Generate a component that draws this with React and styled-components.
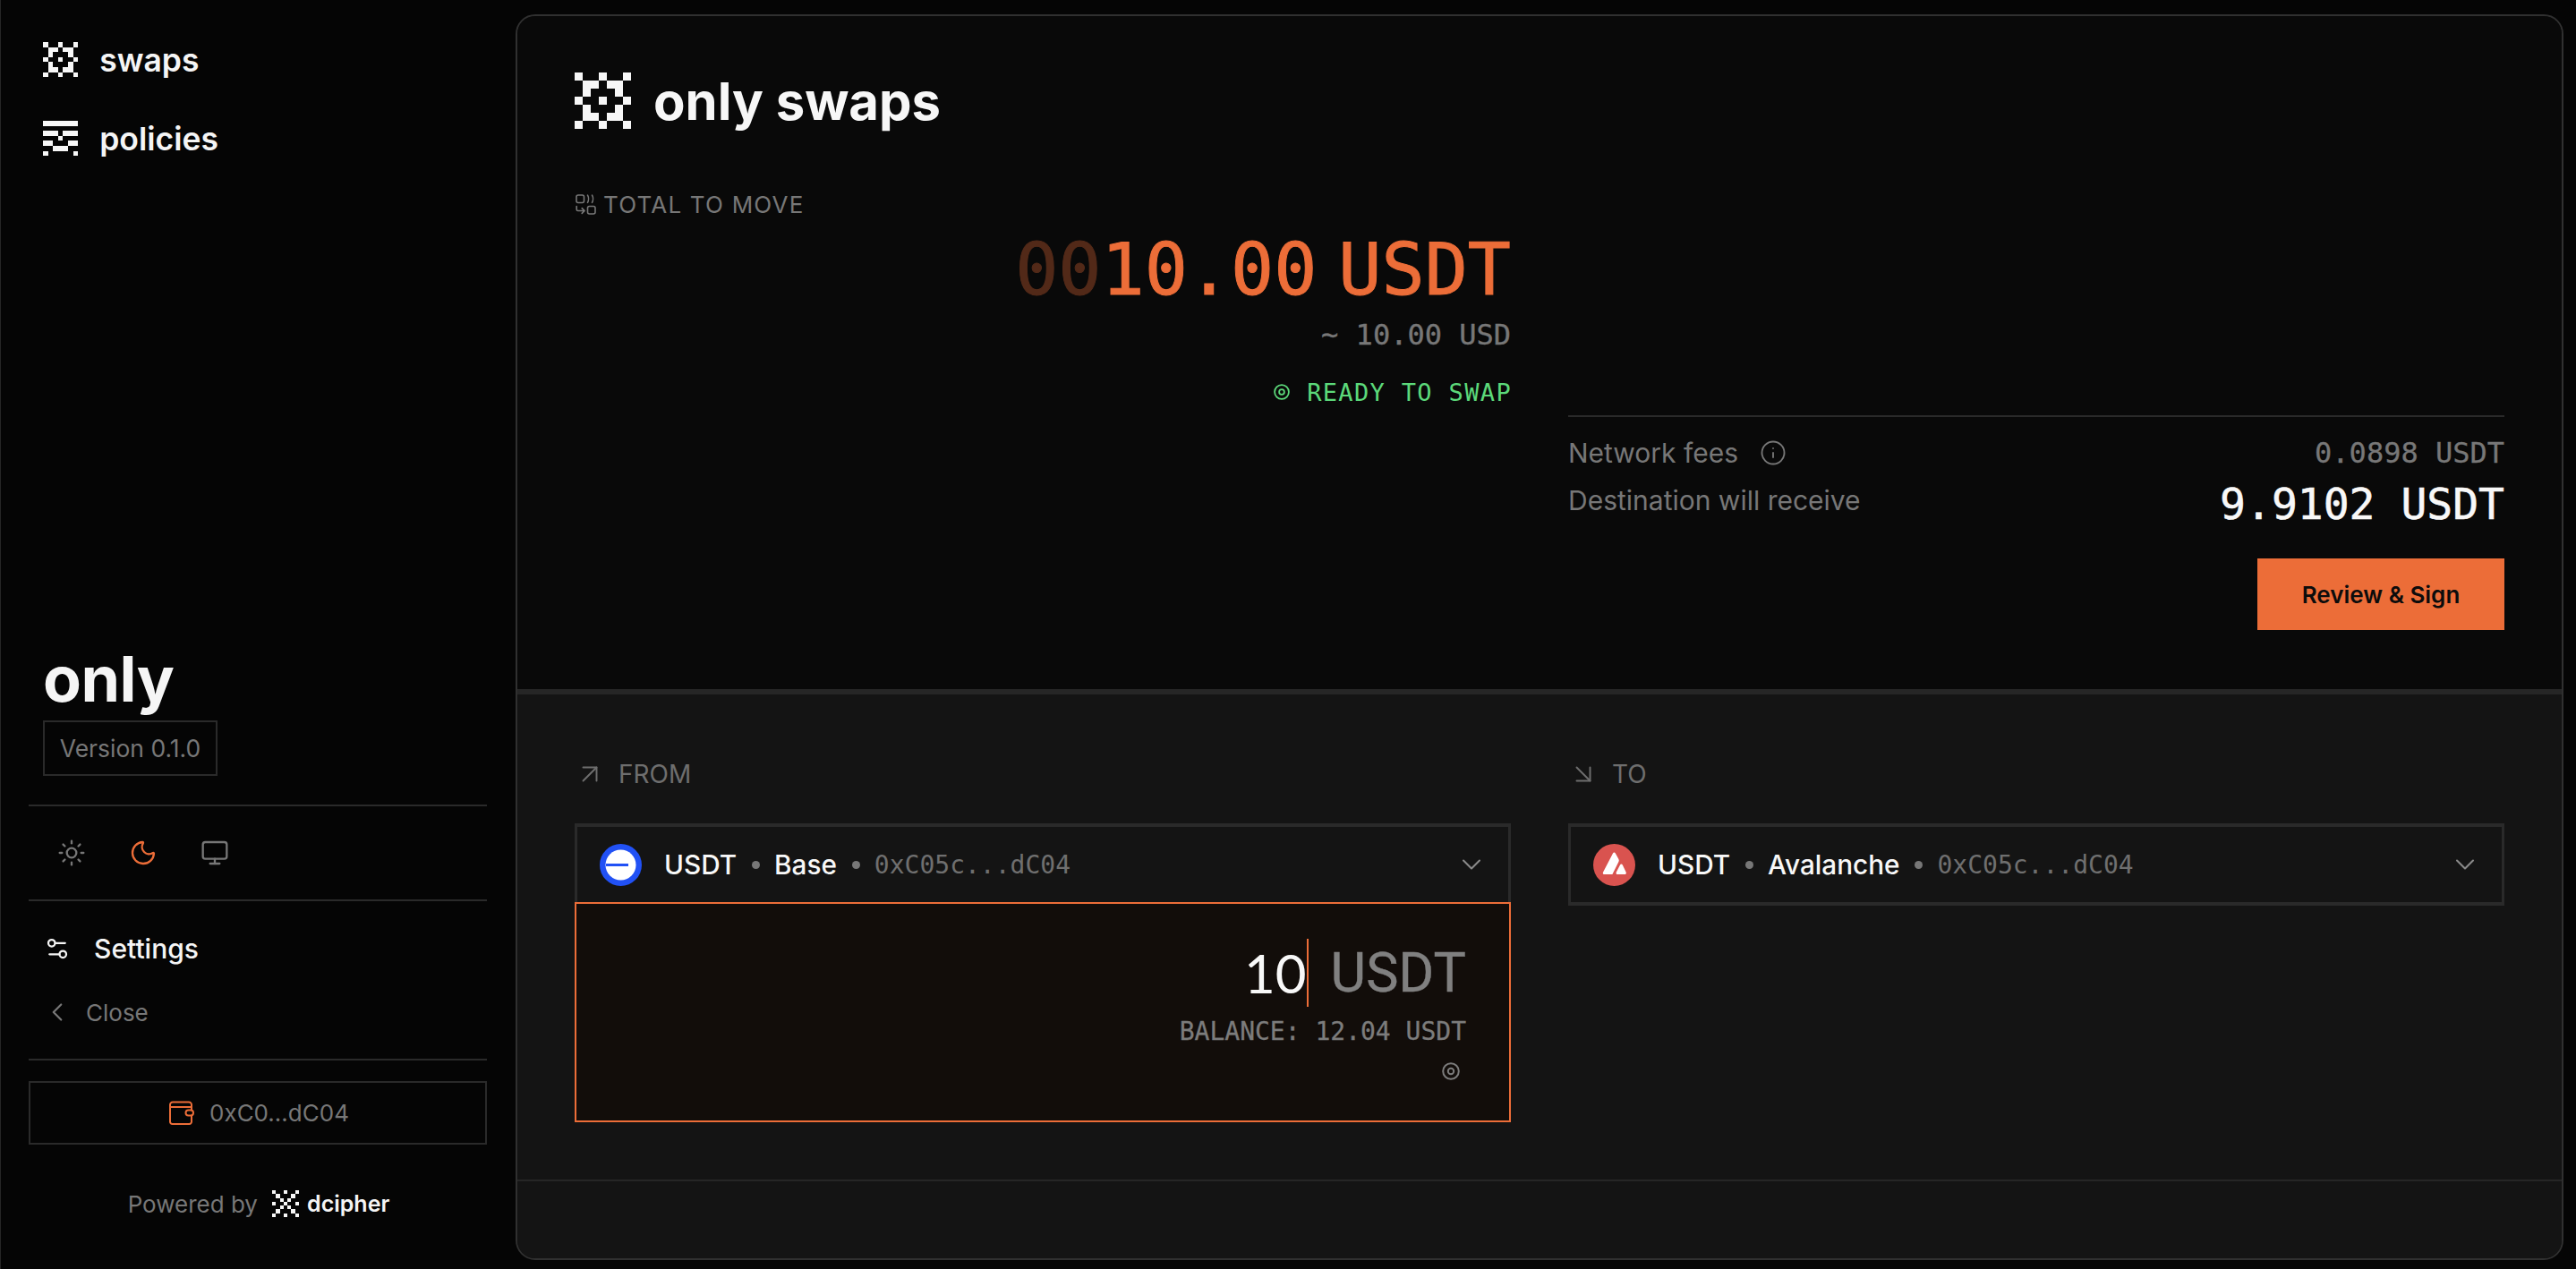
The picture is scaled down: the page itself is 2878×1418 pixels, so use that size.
import React from "react";
import styled, { createGlobalStyle } from "styled-components";
import { Sun, Moon, Monitor, Settings2, ChevronLeft, ChevronDown, Info, ArrowUpRight, ArrowDownRight } from "lucide-react";

const SANS = `Inter, "Liberation Sans", sans-serif`;
const MONO = `"DejaVu Sans Mono", monospace`;
const ORANGE = "#ec6d38";
const DIM = "#777777";
const LINE = "#2a2a2a";

const Global = createGlobalStyle`
  html, body { margin: 0; padding: 0; background: #050505; }
  * { box-sizing: border-box; }
  body { font-family: ${SANS}; color: #f5f5f5; }
`;

const Shell = styled.div`
  display: flex;
  width: 2878px;
  height: 1418px;
  overflow: hidden;
  background: #050505;
`;

const Sidebar = styled.aside`
  width: 576px;
  flex: none;
  display: flex;
  flex-direction: column;
  padding: 0 32px 0 31px;
  border-left: 1px solid #262626;
`;

const Nav = styled.nav`
  display: flex;
  flex-direction: column;
  gap: 48px;
  padding: 47px 0 0 16px;
`;

const NavItem = styled.div`
  display: flex;
  align-items: center;
  gap: 24px;
  height: 40px;
  font-size: 35.5px;
  font-weight: 600;
  color: #f5f5f5;
`;

const Spacer = styled.div`
  flex: 1;
`;

const Brand = styled.div`
  padding-left: 16px;
  font-size: 70px;
  line-height: 68px;
  font-weight: 700;
  letter-spacing: -0.5px;
  color: #f5f5f5;
`;

const VersionBadge = styled.div`
  margin: 12px 0 32px 16px;
  width: 195px;
  height: 62px;
  border: 2px solid ${LINE};
  display: flex;
  align-items: center;
  justify-content: center;
  font-size: 26.5px;
  color: ${DIM};
`;

const Rule = styled.div`
  height: 2px;
  background: ${LINE};
`;

const ThemeRow = styled.div`
  display: flex;
  align-items: center;
  height: 104px;
  padding-left: 32px;
  gap: 48px;
`;

const ThemeButton = styled.span`
  display: flex;
  color: ${(p) => (p.$active ? ORANGE : DIM)};
`;

const SettingsRow = styled.div`
  display: flex;
  align-items: center;
  gap: 26px;
  height: 40px;
  margin: 33px 0 0 17px;
  font-size: 30px;
  font-weight: 500;
  color: #f5f5f5;
`;

const CloseRow = styled.div`
  display: flex;
  align-items: center;
  gap: 15px;
  height: 36px;
  margin: 33px 0 34px 15px;
  font-size: 26px;
  color: ${DIM};
`;

const WalletButton = styled.div`
  margin-top: 23px;
  height: 71px;
  border: 2px solid ${LINE};
  display: flex;
  align-items: center;
  justify-content: center;
  gap: 17px;
  padding-left: 3px;
  font-size: 26px;
  color: ${DIM};
`;

const Powered = styled.div`
  margin: 50px 0 57px;
  height: 32px;
  display: flex;
  align-items: center;
  justify-content: center;
  padding-left: 2px;
  font-size: 26px;
  color: ${DIM};
`;

const PoweredLogo = styled.span`
  display: flex;
  align-items: center;
  margin-left: 16px;
  gap: 9px;
  font-size: 25px;
  font-weight: 600;
  color: #f5f5f5;
`;

const Main = styled.main`
  flex: 1;
  margin: 16px 14px 10px 0;
  border: 2px solid #303030;
  border-radius: 22px;
  overflow: hidden;
  display: flex;
  flex-direction: column;
  background: #141414;
`;

const TopPanel = styled.section`
  height: 758px;
  flex: none;
  background: #090909;
  padding: 63px 64px 0;
  border-bottom: 6px solid #262626;
`;

const Title = styled.div`
  display: flex;
  align-items: center;
  gap: 25px;
  height: 63px;
  font-size: 58px;
  font-weight: 700;
  color: #f7f7f7;
`;

const Columns = styled.div`
  display: grid;
  grid-template-columns: 1fr 1fr;
  column-gap: 64px;
`;

const TopColumns = styled(Columns)`
  height: 560px;
`;

const LeftStack = styled.div`
  display: flex;
  flex-direction: column;
  align-items: flex-end;
  padding-top: 68px;
`;

const SectionLabel = styled.div`
  align-self: flex-start;
  display: flex;
  align-items: center;
  gap: 8px;
  height: 32px;
  padding-left: 1px;
  font-size: 26px;
  letter-spacing: 1.2px;
  color: ${DIM};
`;

const TotalAmount = styled.div`
  display: flex;
  gap: 24px;
  margin-top: 10px;
  font-family: ${MONO};
  font-size: 80px;
  line-height: 96px;
  color: ${ORANGE};
  -webkit-text-stroke: 1px ${ORANGE};
`;

const Zeros = styled.span`
  opacity: 0.32;
`;

const FiatValue = styled.div`
  margin-top: 4px;
  font-family: ${MONO};
  font-size: 32px;
  line-height: 40px;
  color: ${DIM};
  -webkit-text-stroke: 0.4px ${DIM};
`;

const Ready = styled.div`
  margin-top: 28px;
  display: flex;
  align-items: center;
  gap: 19px;
  height: 32px;
  font-family: ${MONO};
  font-size: 27px;
  letter-spacing: 1.35px;
  margin-right: -1px;
  color: #5cd97a;
`;

const Summary = styled.div`
  display: flex;
  flex-direction: column;
  justify-content: flex-end;
`;

const SummaryRule = styled(Rule)`
  margin-bottom: 20px;
`;

const SummaryRow = styled.div`
  display: flex;
  justify-content: space-between;
  align-items: flex-start;
  height: ${(p) => p.$h}px;
`;

const SummaryLabel = styled.span`
  display: flex;
  align-items: center;
  gap: 24px;
  font-size: 30px;
  line-height: 40px;
  color: ${DIM};
`;

const SummaryValue = styled.span`
  font-family: ${MONO};
  font-size: ${(p) => (p.$big ? 48 : 32)}px;
  line-height: ${(p) => (p.$big ? 60 : 40)}px;
  margin-top: ${(p) => (p.$big ? -6 : 0)}px;
  color: ${(p) => (p.$big ? "#f8f8f8" : DIM)};
  -webkit-text-stroke: ${(p) => (p.$big ? 0.6 : 0.3)}px currentColor;
`;

const ReviewButton = styled.button`
  align-self: flex-end;
  margin-top: 29px;
  width: 276px;
  height: 80px;
  border: 0;
  border-radius: 0;
  background: ${ORANGE};
  color: #0c0c0c;
  font-family: ${SANS};
  font-size: 26px;
  font-weight: 600;
`;

const BottomPanel = styled.section`
  flex: 1;
  display: flex;
  flex-direction: column;
  background: #141414;
`;

const SwapArea = styled(Columns)`
  height: 544px;
  padding: 64px 64px 0;
  flex: none;
  border-bottom: 2px solid #262626;
`;

const SideColumn = styled.div`
  display: flex;
  flex-direction: column;
`;

const SideLabel = styled.div`
  display: flex;
  align-items: center;
  height: 50px;
  gap: 14px;
  margin-left: -1px;
  font-size: 28px;
  color: #6e6e6e;
`;

const Select = styled.div`
  margin-top: 30px;
  height: ${(p) => (p.$attached ? 88 : 92)}px;
  border: 3px solid ${LINE};
  border-width: ${(p) => (p.$attached ? "4px 3px 0" : "4px 3px")};
  display: flex;
  align-items: center;
  padding: 0 23px 0 25px;
  font-size: 29.7px;
  font-weight: 500;
  color: #f8f8f8;
`;

const ChainBadge = styled.svg`
  width: 47px;
  height: 47px;
  flex: none;
  margin-right: 25px;
`;

const Dot = styled.span`
  width: 9px;
  height: 9px;
  border-radius: 50%;
  background: #777;
  margin: 0 16px 0 17px;
  flex: none;
`;

const Address = styled.span`
  font-family: ${MONO};
  font-size: 28px;
  font-weight: 400;
  color: #6f6f6f;
`;

const Chevron = styled.span`
  margin-left: auto;
  display: flex;
  color: #8a8a8a;
`;

const AmountBox = styled.div`
  height: 246px;
  border: 2px solid ${ORANGE};
  background: #120d0a;
  display: flex;
  flex-direction: column;
  align-items: flex-end;
  padding: 39px 48px 0 0;
`;

const AmountLine = styled.div`
  display: flex;
  align-items: center;
  height: 76px;
  font-size: 60px;
`;

const AmountInput = styled.span`
  font-family: Lato, sans-serif;
  color: #f8f8f8;
  border-right: 2px solid ${ORANGE};
  line-height: 76px;
  height: 76px;
`;

const AmountUnit = styled.span`
  margin-left: 25px;
  font-family: Roboto, sans-serif;
  font-size: 61px;
  color: #808080;
  -webkit-text-stroke: 0.4px #808080;
`;

const Balance = styled.div`
  margin-top: 11px;
  font-family: ${MONO};
  font-size: 28px;
  line-height: 34px;
  color: #7c7c7c;
  -webkit-text-stroke: 0.3px #7c7c7c;
`;

const MaxTarget = styled.span`
  display: flex;
  margin-top: 17px;
  margin-right: 7px;
  color: #7c7c7c;
`;

const Footer = styled.div`
  flex: 1;
`;

function Pixels({ rows, cell, color = "#f7f7f7" }) {
  const n = rows[0].length;
  const size = n * cell;
  return (
    <svg width={size} height={rows.length * cell} viewBox={`0 0 ${n} ${rows.length}`} shapeRendering="crispEdges" style={{ flex: "none" }}>
      {rows.flatMap((r, y) =>
        r.split("").map((c, x) => (c === "1" ? <rect key={`${x}-${y}`} x={x} y={y} width="1" height="1" fill={color} /> : null))
      )}
    </svg>
  );
}

const SWAP_ICON = ["1001001", "0110110", "0100010", "1001001", "0100010", "0110110", "1001001"];
const POLICY_ICON = ["1111111", "0000000", "1110111", "0001000", "1100011", "0011100", "1000001"];
const DCIPHER_ICON = ["1001001", "0100010", "0010100", "1001001", "0010100", "0100010", "1001001"];

const MoveIcon = () => (
  <svg width="23" height="23" viewBox="0 0 23 23" fill="none" stroke="#777" strokeWidth="1.6" strokeLinecap="round" strokeLinejoin="round" style={{ flex: "none" }}>
    <rect x="1" y="1" width="8.5" height="8.5" rx="2" />
    <rect x="13.5" y="13.5" width="8.5" height="8.5" rx="2" />
    <path d="M13.5 1.2c1.3 2.2 1.3 6 0 8.1M18.5 1.2c1.3 2.2 1.3 6 0 8.1" />
    <path d="M1.2 13.5v3.5c0 .8.6 1.5 1.5 1.5h7.3M7.2 15.6l2.9 2.9-2.9 2.9" />
  </svg>
);

const TargetIcon = ({ size = 20 }) => (
  <svg width={size} height={size} viewBox="0 0 20 20" fill="none" stroke="currentColor" strokeWidth="2" style={{ flex: "none" }}>
    <circle cx="10" cy="10" r="8.8" />
    <circle cx="10" cy="10" r="3.2" />
  </svg>
);

const WalletIcon = () => (
  <svg width="28" height="27" viewBox="0 0 28 27" fill="none" stroke={ORANGE} strokeWidth="2" strokeLinecap="round" strokeLinejoin="round" style={{ flex: "none" }}>
    <path d="M25 10V4.500a3 3 0 0 0-3-3H4a3 3 0 0 0-3 3v19a2.500 2.500 0 0 0 2.500 2.500h19a2.500 2.500 0 0 0 2.500-2.500V17" />
    <path d="M1 7h24" />
    <rect x="18.500" y="10.500" width="8.500" height="6" rx="3" />
  </svg>
);

const BaseBadge = () => (
  <ChainBadge viewBox="0 0 47 47">
    <circle cx="23.5" cy="23.5" r="23.5" fill="#2151f5" />
    <circle cx="23.5" cy="23.5" r="17" fill="#fff" />
    <rect x="7" y="22" width="25" height="3" fill="#2151f5" />
  </ChainBadge>
);

const AvalancheBadge = () => (
  <ChainBadge viewBox="0 0 47 47">
    <circle cx="23.5" cy="23.5" r="23.5" fill="#d9534f" />
    <path d="M22 10.5c.8-1.4 2-1.4 2.800 0l3.600 6.600c.5 1 .5 2 0 3L21.400 34H12.600c-1.600 0-2.300-1.200-1.500-2.600L22 10.500z" fill="#fff" />
    <path d="M30 23.600c.8-1.400 2-1.400 2.800 0l3.800 7.800c.7 1.400 0 2.600-1.600 2.600h-7.600c-1.600 0-2.300-1.200-1.600-2.600L30 23.600z" fill="#fff" />
  </ChainBadge>
);

function SelectBox({ badge, chain, attached }) {
  return (
    <Select $attached={attached}>
      {badge}
      <span>USDT</span>
      <Dot />
      <span>{chain}</span>
      <Dot />
      <Address>0xC05c...dC04</Address>
      <Chevron>
        <ChevronDown size={36} strokeWidth={1.4} />
      </Chevron>
    </Select>
  );
}

export default function App() {
  return (
    <Shell>
      <Global />
      <Sidebar>
        <Nav>
          <NavItem>
            <Pixels rows={SWAP_ICON} cell={5.6} />
            swaps
          </NavItem>
          <NavItem>
            <Pixels rows={POLICY_ICON} cell={5.6} />
            policies
          </NavItem>
        </Nav>
        <Spacer />
        <Brand>only</Brand>
        <VersionBadge>Version 0.1.0</VersionBadge>
        <Rule />
        <ThemeRow>
          <ThemeButton><Sun size={32} strokeWidth={1.75} /></ThemeButton>
          <ThemeButton $active><Moon size={32} strokeWidth={1.75} /></ThemeButton>
          <ThemeButton><Monitor size={32} strokeWidth={1.75} /></ThemeButton>
        </ThemeRow>
        <Rule />
        <SettingsRow>
          <Settings2 size={30} strokeWidth={1.8} />
          Settings
        </SettingsRow>
        <CloseRow>
          <ChevronLeft size={34} strokeWidth={1.6} />
          Close
        </CloseRow>
        <Rule />
        <WalletButton>
          <WalletIcon />
          0xC0…dC04
        </WalletButton>
        <Powered>
          Powered by
          <PoweredLogo>
            <Pixels rows={DCIPHER_ICON} cell={4.3} />
            dcipher
          </PoweredLogo>
        </Powered>
      </Sidebar>
      <Main>
        <TopPanel>
          <Title>
            <Pixels rows={SWAP_ICON} cell={9} />
            only swaps
          </Title>
          <TopColumns>
            <LeftStack>
              <SectionLabel>
                <MoveIcon />
                TOTAL TO MOVE
              </SectionLabel>
              <TotalAmount>
                <span><Zeros>00</Zeros>10.00</span>
                <span>USDT</span>
              </TotalAmount>
              <FiatValue>~ 10.00 USD</FiatValue>
              <Ready>
                <TargetIcon size={18} />
                READY TO SWAP
              </Ready>
            </LeftStack>
            <Summary>
              <SummaryRule />
              <SummaryRow $h={53}>
                <SummaryLabel>
                  Network fees
                  <Info size={30} strokeWidth={1.5} />
                </SummaryLabel>
                <SummaryValue>0.0898 USDT</SummaryValue>
              </SummaryRow>
              <SummaryRow $h={56}>
                <SummaryLabel>Destination will receive</SummaryLabel>
                <SummaryValue $big>9.9102 USDT</SummaryValue>
              </SummaryRow>
              <ReviewButton>Review &amp; Sign</ReviewButton>
            </Summary>
          </TopColumns>
        </TopPanel>
        <BottomPanel>
          <SwapArea>
            <SideColumn>
              <SideLabel>
                <ArrowUpRight size={36} strokeWidth={1.3} />
                FROM
              </SideLabel>
              <SelectBox badge={<BaseBadge />} chain="Base" attached />
              <AmountBox>
                <AmountLine>
                  <AmountInput>10</AmountInput>
                  <AmountUnit>USDT</AmountUnit>
                </AmountLine>
                <Balance>BALANCE: 12.04 USDT</Balance>
                <MaxTarget><TargetIcon size={20} /></MaxTarget>
              </AmountBox>
            </SideColumn>
            <SideColumn>
              <SideLabel>
                <ArrowDownRight size={36} strokeWidth={1.3} />
                TO
              </SideLabel>
              <SelectBox badge={<AvalancheBadge />} chain="Avalanche" />
            </SideColumn>
          </SwapArea>
          <Footer />
        </BottomPanel>
      </Main>
    </Shell>
  );
}
